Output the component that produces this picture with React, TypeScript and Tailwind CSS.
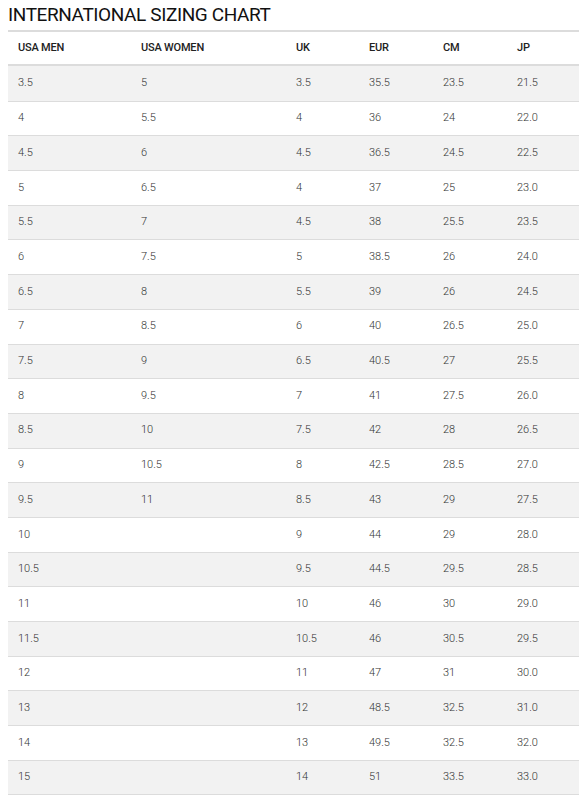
import React from 'react';

const headers = ['USA MEN', 'USA WOMEN', 'UK', 'EUR', 'CM', 'JP'];

const rows: string[][] = [
  ['3.5', '5', '3.5', '35.5', '23.5', '21.5'],
  ['4', '5.5', '4', '36', '24', '22.0'],
  ['4.5', '6', '4.5', '36.5', '24.5', '22.5'],
  ['5', '6.5', '4', '37', '25', '23.0'],
  ['5.5', '7', '4.5', '38', '25.5', '23.5'],
  ['6', '7.5', '5', '38.5', '26', '24.0'],
  ['6.5', '8', '5.5', '39', '26', '24.5'],
  ['7', '8.5', '6', '40', '26.5', '25.0'],
  ['7.5', '9', '6.5', '40.5', '27', '25.5'],
  ['8', '9.5', '7', '41', '27.5', '26.0'],
  ['8.5', '10', '7.5', '42', '28', '26.5'],
  ['9', '10.5', '8', '42.5', '28.5', '27.0'],
  ['9.5', '11', '8.5', '43', '29', '27.5'],
  ['10', '', '9', '44', '29', '28.0'],
  ['10.5', '', '9.5', '44.5', '29.5', '28.5'],
  ['11', '', '10', '46', '30', '29.0'],
  ['11.5', '', '10.5', '46', '30.5', '29.5'],
  ['12', '', '11', '47', '31', '30.0'],
  ['13', '', '12', '48.5', '32.5', '31.0'],
  ['14', '', '13', '49.5', '32.5', '32.0'],
  ['15', '', '14', '51', '33.5', '33.0'],
];

// column widths measured off the chart
const cols = 'grid grid-cols-[123px_155px_73px_74px_74px_72px]';

export default function App() {
  return (
    <div className="w-[588px] h-[801px] overflow-hidden bg-white font-['Roboto',sans-serif]">
      <h1 className="pl-[8px] pt-[3px] h-[30px] text-[19px] leading-[24px] text-[#111] tracking-[-0.4px]">
        INTERNATIONAL SIZING CHART
      </h1>
      <div className="ml-[8px] w-[571px] border-b border-[#dcdcdc]">
        <div className={`${cols} h-[36px] items-center border-t-2 border-b-2 border-[#dcdcdc] bg-white`}>
          {headers.map((h) => (
            <div key={h} className="pl-[10px] text-[11px] font-medium text-[#222] tracking-[-0.2px]">
              {h}
            </div>
          ))}
        </div>
        {rows.map((r, i) => (
          <div
            key={i}
            className={`${cols} box-border h-[34.7px] items-center ${i > 0 ? 'border-t border-[#dcdcdc]' : ''} ${
              i % 2 === 0 ? 'bg-[#f2f2f2]' : 'bg-white'
            }`}
          >
            {r.map((c, j) => (
              <div key={j} className="pl-[10px] text-[11px] font-light text-[#333]">
                {c}
              </div>
            ))}
          </div>
        ))}
      </div>
    </div>
  );
}
